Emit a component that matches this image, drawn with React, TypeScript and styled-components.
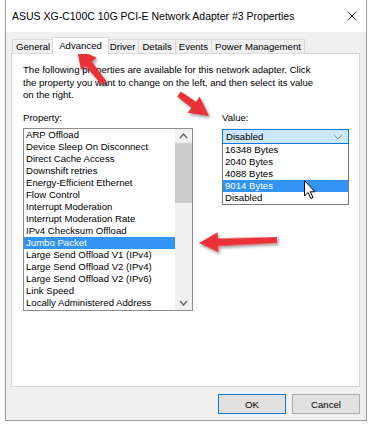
import React from 'react';
import styled, { createGlobalStyle } from 'styled-components';

const GlobalStyle = createGlobalStyle`
  html, body {
    margin: 0;
    padding: 0;
    background: #fff;
  }
  body {
    font-family: "Liberation Sans", Arial, sans-serif;
    font-size: 9.6px;
    color: #000;
  }
`;

const Page = styled.div`
  position: relative;
  width: 370px;
  height: 424px;
  overflow: hidden;
`;

const Window = styled.div`
  box-sizing: border-box;
  margin-left: 5px;
  width: 362px;
  height: 421px;
  border: 1px solid #9a9a9a;
  border-top: none;
  background: #f0f0f0;
  display: flex;
  flex-direction: column;
`;

const TitleBar = styled.div`
  height: 32px;
  flex: none;
  background: #fff;
  display: flex;
  align-items: center;
  justify-content: space-between;
  padding: 0 9px 0 6px;
  font-size: 10.5px;
`;

const Body = styled.div`
  flex: 1;
  padding: 5px 6px 0 5px;
  display: flex;
  flex-direction: column;
`;

const TabRow = styled.div`
  display: flex;
  align-items: flex-end;
  height: 16px;
  padding-left: 1px;
`;

const Tab = styled.div<{ $active?: boolean }>`
  position: relative;
  box-sizing: border-box;
  height: ${(p) => (p.$active ? '17px' : '14px')};
  margin: ${(p) => (p.$active ? '0 -2px -1px -2px' : '0 0 0 -1px')};
  padding: ${(p) => (p.$active ? '1px 6px 0' : '0 3px')};
  border: 1px solid #d9d9d9;
  border-bottom: none;
  background: ${(p) => (p.$active ? '#fff' : '#f0f0f0')};
  z-index: ${(p) => (p.$active ? 1 : 0)};
  line-height: 13px;
  white-space: nowrap;

  &:first-child {
    margin-left: 0;
  }
`;

const Panel = styled.div`
  box-sizing: border-box;
  height: 334px;
  background: #fff;
  border: 1px solid #d9d9d9;
  padding: 10px 9px 0 11px;
`;

const Description = styled.p`
  margin: 0;
  width: 300px;
  line-height: 12.5px;
`;

const Columns = styled.div`
  display: grid;
  grid-template-columns: 170px 127px;
  column-gap: 29px;
  margin-top: 10px;
`;

const Column = styled.div`
  display: flex;
  flex-direction: column;
`;

const Label = styled.div`
  line-height: 12.5px;
  margin-bottom: 4px;
`;

const ListBox = styled.div`
  box-sizing: border-box;
  height: 183px;
  border: 1px solid #8c8c8c;
  display: flex;
`;

const Items = styled.div`
  flex: 1;
  overflow: hidden;
`;

const ListItem = styled.div<{ $selected?: boolean }>`
  height: 12px;
  line-height: 12px;
  padding-left: 2px;
  white-space: nowrap;
  background: ${(p) => (p.$selected ? '#3393f5' : 'transparent')};
  color: ${(p) => (p.$selected ? '#fff' : '#000')};
`;

const ScrollBar = styled.div`
  width: 17px;
  flex: none;
  background: #f0f0f0;
  display: flex;
  flex-direction: column;
`;

const ScrollButton = styled.div`
  height: 14px;
  display: flex;
  align-items: center;
  justify-content: center;
`;

const Thumb = styled.div`
  height: 60px;
  background: #cdcdcd;
`;

const Track = styled.div`
  flex: 1;
`;

const ComboWrap = styled.div`
  position: relative;
  margin-top: 1px;
`;

const Combo = styled.div`
  box-sizing: border-box;
  height: 15px;
  border: 1px solid #0078d7;
  background: #cce8ff;
  display: flex;
  align-items: center;
  justify-content: space-between;
  padding: 0 5px 0 3px;
`;

const DropDown = styled.div`
  position: absolute;
  top: 100%;
  left: 0;
  right: 0;
  background: #fff;
  border: 1px solid #7a7a7a;
  border-top: none;
`;

const Buttons = styled.div`
  display: flex;
  justify-content: flex-end;
  gap: 6px;
  margin-top: 7px;
`;

const Button = styled.button<{ $primary?: boolean }>`
  box-sizing: border-box;
  width: 68px;
  height: 20px;
  padding: 0;
  font: inherit;
  color: #000;
  background: #e1e1e1;
  border: 1px solid ${(p) => (p.$primary ? '#0078d7' : '#adadad')};
`;

const Overlay = styled.svg`
  position: absolute;
  top: 0;
  left: 0;
  pointer-events: none;
`;

const properties = [
  'ARP Offload',
  'Device Sleep On Disconnect',
  'Direct Cache Access',
  'Downshift retries',
  'Energy-Efficient Ethernet',
  'Flow Control',
  'Interrupt Moderation',
  'Interrupt Moderation Rate',
  'IPv4 Checksum Offload',
  'Jumbo Packet',
  'Large Send Offload V1 (IPv4)',
  'Large Send Offload V2 (IPv4)',
  'Large Send Offload V2 (IPv6)',
  'Link Speed',
  'Locally Administered Address',
];

const values = ['16348 Bytes', '2040 Bytes', '4088 Bytes', '9014 Bytes', 'Disabled'];

const Chevron = ({
  up,
  color = '#606060',
  w = 7,
  sw = 1.3,
}: {
  up?: boolean;
  color?: string;
  w?: number;
  sw?: number;
}) => (
  <svg width={w + 2} height="6" viewBox={`0 0 ${w + 2} 6`}>
    <polyline
      points={up ? `1,5 ${w / 2 + 1},1 ${w + 1},5` : `1,1 ${w / 2 + 1},5 ${w + 1},1`}
      fill="none"
      stroke={color}
      strokeWidth={sw}
    />
  </svg>
);

const Arrow = ({ x1, y1, x2, y2 }: { x1: number; y1: number; x2: number; y2: number }) => {
  const len = Math.hypot(x2 - x1, y2 - y1);
  const ang = (Math.atan2(y2 - y1, x2 - x1) * 180) / Math.PI;
  const h = 19;
  const pts = `0,-3 ${len - h},-3.8 ${len - h},-10 ${len},0 ${len - h},10 ${len - h},3.8 0,3`;
  return (
    <g transform={`translate(${x1} ${y1}) rotate(${ang})`}>
      <polygon points={pts} fill="#ea3339" />
    </g>
  );
};

export default function App() {
  return (
    <Page>
      <GlobalStyle />
      <Window>
        <TitleBar>
          <span>ASUS XG-C100C 10G PCI-E Network Adapter #3 Properties</span>
          <svg width="10" height="10" viewBox="0 0 10 10">
            <path d="M0.5 0.5 L9.5 9.5 M9.5 0.5 L0.5 9.5" stroke="#333" strokeWidth="1" />
          </svg>
        </TitleBar>
        <Body>
          <TabRow>
            <Tab>General</Tab>
            <Tab $active>Advanced</Tab>
            <Tab>Driver</Tab>
            <Tab>Details</Tab>
            <Tab>Events</Tab>
            <Tab>Power Management</Tab>
          </TabRow>
          <Panel>
            <Description>
              The following properties are available for this network adapter. Click the property you
              want to change on the left, and then select its value on the right.
            </Description>
            <Columns>
              <Column>
                <Label>Property:</Label>
                <ListBox>
                  <Items>
                    {properties.map((p) => (
                      <ListItem key={p} $selected={p === 'Jumbo Packet'}>
                        {p}
                      </ListItem>
                    ))}
                  </Items>
                  <ScrollBar>
                    <ScrollButton>
                      <Chevron up />
                    </ScrollButton>
                    <Thumb />
                    <Track />
                    <ScrollButton>
                      <Chevron />
                    </ScrollButton>
                  </ScrollBar>
                </ListBox>
              </Column>
              <Column>
                <Label>Value:</Label>
                <ComboWrap>
                  <Combo>
                    <span>Disabled</span>
                    <Chevron color="#8a8a8a" w={8} sw={1} />
                  </Combo>
                  <DropDown>
                    {values.map((v) => (
                      <ListItem key={v} $selected={v === '9014 Bytes'}>
                        {v}
                      </ListItem>
                    ))}
                  </DropDown>
                </ComboWrap>
              </Column>
            </Columns>
          </Panel>
          <Buttons>
            <Button $primary>OK</Button>
            <Button>Cancel</Button>
          </Buttons>
        </Body>
      </Window>
      <Overlay width="370" height="424" viewBox="0 0 370 424">
        <defs>
          <filter id="shadow" x="-20%" y="-20%" width="140%" height="140%">
            <feDropShadow dx="1.5" dy="2" stdDeviation="1.4" floodColor="#000" floodOpacity="0.4" />
          </filter>
        </defs>
        <g filter="url(#shadow)">
          <Arrow x1={104} y1={83} x2={77} y2={49} />
          <Arrow x1={179} y1={94} x2={209} y2={116} />
          <Arrow x1={277} y1={240} x2={199} y2={243} />
        </g>
        <path
          d="M304.5 180.5 L304.5 196 L308 192.5 L310.8 198.5 L313 197.5 L310.3 191.8 L315 191.8 Z"
          fill="#fff"
          stroke="#000"
          strokeWidth="1"
        />
      </Overlay>
    </Page>
  );
}
